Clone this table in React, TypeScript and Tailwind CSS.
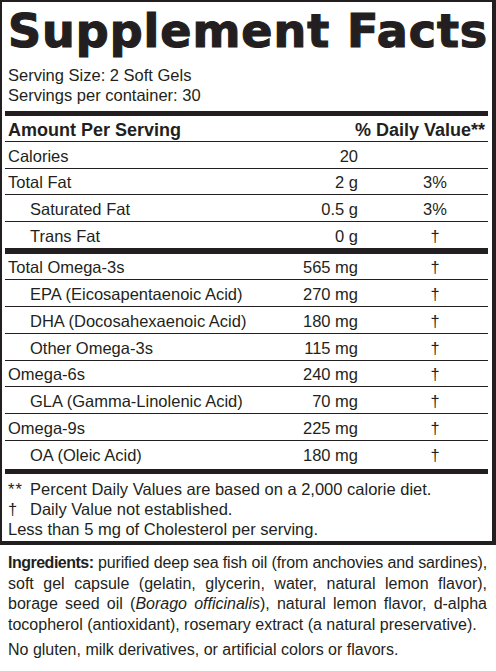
const ink = "text-[#231f20]";

type Row = { label: string; amount: string; dv: string; sub?: boolean };

const fatRows: Row[] = [
  { label: "Calories", amount: "20", dv: "" },
  { label: "Total Fat", amount: "2 g", dv: "3%" },
  { label: "Saturated Fat", amount: "0.5 g", dv: "3%", sub: true },
  { label: "Trans Fat", amount: "0 g", dv: "†", sub: true },
];

const omegaRows: Row[] = [
  { label: "Total Omega-3s", amount: "565 mg", dv: "†" },
  { label: "EPA (Eicosapentaenoic Acid)", amount: "270 mg", dv: "†", sub: true },
  { label: "DHA (Docosahexaenoic Acid)", amount: "180 mg", dv: "†", sub: true },
  { label: "Other Omega-3s", amount: "115 mg", dv: "†", sub: true },
  { label: "Omega-6s", amount: "240 mg", dv: "†" },
  { label: "GLA (Gamma-Linolenic Acid)", amount: "70 mg", dv: "†", sub: true },
  { label: "Omega-9s", amount: "225 mg", dv: "†" },
  { label: "OA (Oleic Acid)", amount: "180 mg", dv: "†", sub: true },
];

const FactRow = ({ row, last, h }: { row: Row; last: boolean; h: string }) => (
  <div
    className={`flex items-center pt-[2px] leading-[20px] ${h} ${
      last ? "" : "border-b-[1.5px] border-[#231f20]"
    }`}
  >
    <div className={`flex-1 whitespace-nowrap ${row.sub ? "pl-[25px]" : "pl-[3px]"}`}>{row.label}</div>
    <div className="w-[100px] text-right whitespace-nowrap">{row.amount}</div>
    <div className="w-[90px] ml-[32px] mr-[8px] text-center">{row.dv}</div>
  </div>
);

const App = () => {
  return (
    <div className={`w-[496px] min-h-[671px] bg-white ${ink} font-['Liberation_Sans',Arial,sans-serif]`}>
      <div className="border-l-2 border-t-2 border-r-4 border-b-4 border-[#231f20] pl-[3px] pr-[4px]">
        <h1 className="pt-[6px] pl-[3px] text-[46px] leading-[46px] font-bold tracking-[0.95px] whitespace-nowrap font-['DejaVu_Sans',sans-serif] [-webkit-text-stroke:1.2px_#231f20]">
          Supplement Facts
        </h1>
        <div className="mt-[11px] pl-[3px] text-[16.5px] leading-[20px]">
          <p>Serving Size: 2 Soft Gels</p>
          <p>Servings per container: 30</p>
        </div>
        <div className="mt-[6px] h-[5px] bg-[#231f20]" />
        <div className="flex justify-between h-[26px] pt-[2px] leading-[24px] text-[18px] font-bold border-b-[1.5px] border-[#231f20]">
          <span className="pl-[3px]">Amount Per Serving</span>
          <span className="pr-[3px]">% Daily Value**</span>
        </div>
        <div className="text-[16.5px]">
          {fatRows.map((r, i) => (
            <FactRow key={r.label} row={r} last={i === fatRows.length - 1} h="h-[26.5px]" />
          ))}
        </div>
        <div className="h-[5.5px] bg-[#231f20]" />
        <div className="text-[16.5px]">
          {omegaRows.map((r, i) => (
            <FactRow key={r.label} row={r} last={i === omegaRows.length - 1} h="h-[26.75px]" />
          ))}
        </div>
        <div className="mt-[1px] h-[5.5px] bg-[#231f20]" />
        <div className="mt-[5px] pb-[2px] pl-[3px] text-[16.5px] leading-[20px]">
          <div className="flex">
            <span className="w-[22px] tracking-[1px]">**</span>
            <span>Percent Daily Values are based on a 2,000 calorie diet.</span>
          </div>
          <div className="flex">
            <span className="w-[22px]">†</span>
            <span>Daily Value not established.</span>
          </div>
          <p>Less than 5 mg of Cholesterol per serving.</p>
        </div>
      </div>
      <div className="mt-[8px] px-[8px] pr-[9px] text-[16px] leading-[20.7px]">
        <p className="whitespace-nowrap text-justify [text-align-last:justify] tracking-[-0.15px]">
          <b className="tracking-[-0.5px]">Ingredients:</b> purified deep sea fish oil (from anchovies and sardines),
        </p>
        <p className="whitespace-nowrap text-justify [text-align-last:justify]">
          soft gel capsule (gelatin, glycerin, water, natural lemon flavor),
        </p>
        <p className="whitespace-nowrap text-justify [text-align-last:justify]">
          borage seed oil (<i>Borago officinalis</i>), natural lemon flavor, d-alpha
        </p>
        <p className="whitespace-nowrap">tocopherol (antioxidant), rosemary extract (a natural preservative).</p>
        <p className="mt-[4.3px] whitespace-nowrap">No gluten, milk derivatives, or artificial colors or flavors.</p>
      </div>
    </div>
  );
};

export default App;
